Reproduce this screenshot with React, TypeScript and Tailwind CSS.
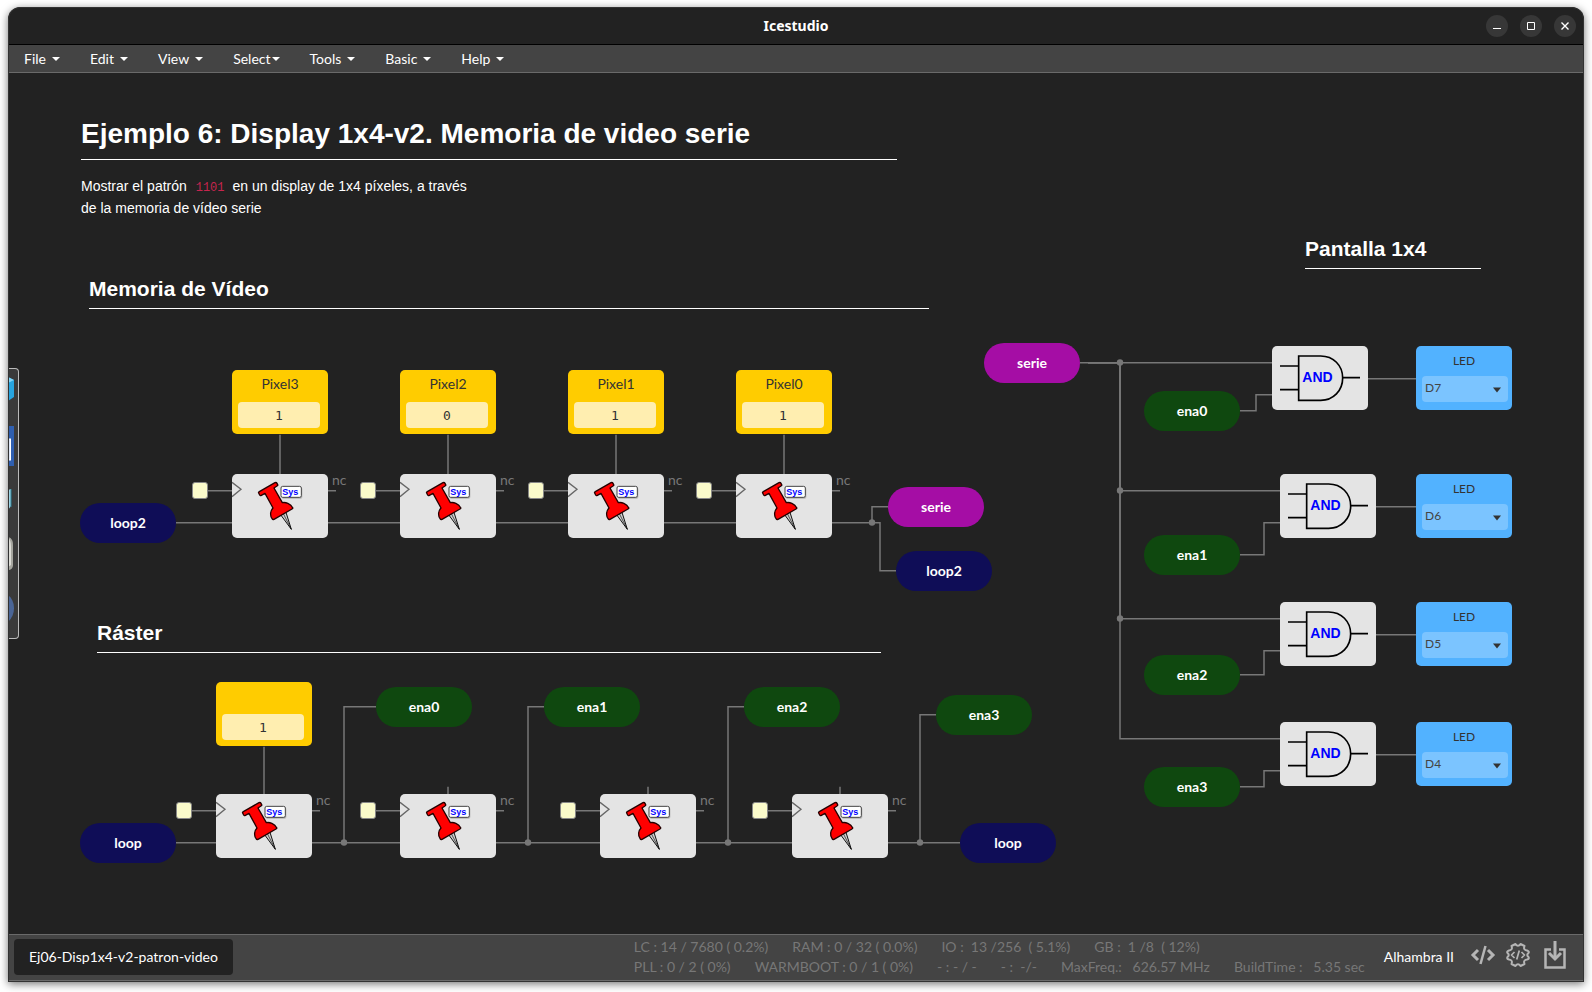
import type { ReactNode } from "react";

const MENUS = ["File", "Edit", "View", "Select", "Tools", "Basic", "Help"];

type Tone = "navy" | "green" | "magenta";
type Label = { name: string; x: number; y: number; tone: Tone };

const TONES: Record<Tone, string> = {
  navy: "bg-[#0f0d57]",
  green: "bg-[#0f480f]",
  magenta: "bg-[#a50da5]",
};

const LABELS: Label[] = [
  { name: "loop2", x: 72, y: 429, tone: "navy" },
  { name: "serie", x: 880, y: 413, tone: "magenta" },
  { name: "loop2", x: 888, y: 477, tone: "navy" },
  { name: "loop", x: 72, y: 749, tone: "navy" },
  { name: "loop", x: 952, y: 749, tone: "navy" },
  { name: "ena0", x: 368, y: 613, tone: "green" },
  { name: "ena1", x: 536, y: 613, tone: "green" },
  { name: "ena2", x: 736, y: 613, tone: "green" },
  { name: "ena3", x: 928, y: 621, tone: "green" },
  { name: "serie", x: 976, y: 269, tone: "magenta" },
  { name: "ena0", x: 1136, y: 317, tone: "green" },
  { name: "ena1", x: 1136, y: 461, tone: "green" },
  { name: "ena2", x: 1136, y: 581, tone: "green" },
  { name: "ena3", x: 1136, y: 693, tone: "green" },
];

const CONSTANTS = [
  { name: "Pixel3", value: "1", x: 224, y: 296 },
  { name: "Pixel2", value: "0", x: 392, y: 296 },
  { name: "Pixel1", value: "1", x: 560, y: 296 },
  { name: "Pixel0", value: "1", x: 728, y: 296 },
  { name: "", value: "1", x: 208, y: 608 },
];

const REGISTERS = [
  { x: 224, y: 400 },
  { x: 392, y: 400 },
  { x: 560, y: 400 },
  { x: 728, y: 400 },
  { x: 208, y: 720 },
  { x: 392, y: 720 },
  { x: 592, y: 720 },
  { x: 784, y: 720 },
];

const GATES = [
  { x: 1264, y: 272 },
  { x: 1272, y: 400 },
  { x: 1272, y: 528 },
  { x: 1272, y: 648 },
];

const LEDS = [
  { pin: "D7", y: 272 },
  { pin: "D6", y: 400 },
  { pin: "D5", y: 528 },
  { pin: "D4", y: 648 },
];

const WIRES = [
  "M272 360V400", "M440 360V400", "M608 360V400", "M776 360V400",
  "M168 448H224", "M320 448H392", "M488 448H560", "M656 448H728",
  "M824 448H864V432H880", "M864 448H872V496H888",
  "M256 672V720", "M440 712V720", "M640 712V720", "M832 712V720",
  "M168 768H208", "M304 768H392", "M488 768H592", "M688 768H784", "M880 768H952",
  "M336 768V632H368", "M520 768V632H536", "M720 768V632H736", "M912 768V640H928",
  "M1072 288H1264", "M1080 288H1112V664H1272", "M1080 288H1112V544H1272", "M1080 288H1112V416H1272",
  "M1232 336H1248V320H1264", "M1232 480H1256V448H1272",
  "M1232 600H1256V576H1272", "M1232 712H1256V696H1272",
  "M1360 304H1408", "M1368 432H1408", "M1368 560H1408", "M1368 680H1408",
];

const JUNCTIONS = [
  [864, 448], [336, 768], [520, 768], [720, 768], [912, 768],
  [1112, 288], [1112, 416], [1112, 544],
];

function Place({ x, y, children }: { x: number; y: number; children: ReactNode }) {
  return (
    <div className="absolute" style={{ left: x, top: y }}>
      {children}
    </div>
  );
}

function Wires() {
  return (
    <svg className="absolute inset-0 h-full w-full" aria-hidden="true">
      <g transform="translate(0 0.75)" fill="none" stroke="#777" strokeWidth="1.5">
        {WIRES.map((d) => (
          <path key={d} d={d} />
        ))}
        {REGISTERS.map(({ x, y }) => (
          <path key={`${x}-${y}`} d={`M${x - 32} ${y + 16}H${x}M${x + 96} ${y + 16}h8`} />
        ))}
      </g>
      <g fill="#777">
        {JUNCTIONS.map(([x, y]) => (
          <circle key={`${x}-${y}`} cx={x} cy={y + 0.5} r="3.2" />
        ))}
      </g>
    </svg>
  );
}

function Pill({ name, tone }: { name: string; tone: Tone }) {
  return (
    <div className={`flex h-10 w-24 items-center justify-center rounded-[20px] text-sm font-bold text-white ${TONES[tone]}`}>
      {name}
    </div>
  );
}

function Constant({ name, value }: { name: string; value: string }) {
  return (
    <label className="flex h-16 w-24 flex-col rounded-[5px] bg-[#ffcc00] pt-1 pr-2 pb-1.5 pl-1.5 text-center text-[#333]">
      <span className="h-7 pl-0.5 text-sm leading-5">{name}</span>
      <input
        aria-label={name || "Constante"}
        defaultValue={value}
        className="h-[26px] w-full rounded bg-[#ffeeb0] text-center font-['DejaVu_Sans_Mono',monospace] text-[13px] text-[#333] outline-none"
      />
    </label>
  );
}

function Register() {
  return (
    <div className="relative h-16 w-24 rounded-[5px] bg-[#e4e4e4]">
      <svg viewBox="0 0 288 192" className="h-16 w-24" aria-hidden="true">
        <path d="M0 25L27 46L0 68" fill="none" stroke="#666" strokeWidth="4" />
        <path d="M145 121L178 166L161 112Z" fill="#d0d0d0" stroke="#111" strokeWidth="3" strokeLinejoin="round" />
        <path d="M153 117L178 166" stroke="#111" strokeWidth="2" />
        <path
          d="M80 57C79 55 80 54 82 53L129 26C132 25 134 26 135 28L137 32C138 34 137 35 135 36L126 42L151 86C160 84 176 88 182 101C183 103 182 104 180 105L126 136C123 137 122 137 121 135C112 124 116 109 123 102L99 58L88 64C86 65 84 65 83 63Z"
          fill="#ff0000"
          stroke="#250000"
          strokeWidth="4"
          strokeLinejoin="round"
        />
        <rect x="149" y="40" width="62" height="34" rx="5" fill="#b5b5b5" />
        <rect x="147" y="37" width="61" height="33" rx="5" fill="#fff" stroke="#444" strokeWidth="3" />
        <text x="151" y="63" fontSize="27" fontWeight="700" fill="#0000ff" fontFamily="'Liberation Sans', sans-serif">
          Sys
        </text>
      </svg>
      <span className="absolute -top-1 left-25 text-sm leading-5 text-[#777]">nc</span>
      <span className="absolute top-2 -left-10 h-[17px] w-4 rounded-[3px] border border-[#888] bg-[#fbfbcb]" />
    </div>
  );
}

function AndGate() {
  return (
    <div className="h-16 w-24 rounded-[5px] bg-[#e4e4e4]">
      <svg viewBox="0 0 288 192" className="h-16 w-24" aria-label="AND">
        <path
          d="M24 60H80M24 131H80M212 95H264M80 30H146C184 30 212 58 212 96S184 163 146 163H80Z"
          fill="none"
          stroke="#000"
          strokeWidth="5"
        />
        <text x="91" y="109" fontSize="42" fontWeight="700" fill="#0000ff" fontFamily="'Liberation Sans', sans-serif">
          AND
        </text>
      </svg>
    </div>
  );
}

function Led({ pin }: { pin: string }) {
  return (
    <label className="relative flex h-16 w-24 flex-col rounded-[5px] bg-[#52b2ff] pt-[7px] pr-1 pl-1.5 text-xs text-[#333]">
      <span className="h-[23px] pr-0.5 text-center leading-4">LED</span>
      <select
        aria-label={`LED ${pin}`}
        defaultValue={pin}
        className="h-[26px] w-full appearance-none rounded bg-[#7bc4ff] pb-0.5 pl-[3px] text-[#444] outline-none"
      >
        <option>{pin}</option>
      </select>
      <svg viewBox="0 0 8 6" className="pointer-events-none absolute right-[11px] bottom-[17px] h-1.5 w-2" aria-hidden="true">
        <path d="M0 0.5H8L4 5.5Z" fill="#333" />
      </svg>
    </label>
  );
}

function SectionTitle({ width, children }: { width: string; children: ReactNode }) {
  return (
    <h2 className={`border-b border-white pb-1 font-['Liberation_Sans',Arial,sans-serif] text-[21px] leading-[30px] font-bold text-white ${width}`}>
      {children}
    </h2>
  );
}

function Toolbox() {
  return (
    <aside className="absolute top-[295px] left-0 h-[271px] w-[11px] overflow-hidden rounded-r border border-l-0 border-[#bbb] bg-[#3a3a3a]">
      <svg width="11" height="269" aria-hidden="true">
        <path d="M0 8L6 11V28L0 32Z" fill="#27a5e0" />
        <path d="M0 8L6 11L0 14Z" fill="#7fd4f7" />
        <rect x="0" y="57" width="6" height="40" fill="#2f5fb0" />
        <rect x="0" y="70" width="2.5" height="21" fill="#dde6f5" stroke="#fff" strokeWidth="1" />
        <path d="M0 121L3 120V137L0 141Z" fill="#9fd6e6" />
        <path d="M3 120V138" stroke="#2d8096" strokeWidth="1" />
        <path d="M0 168C4 169 5 172 5 176V196C5 199 3 201 0 201Z" fill="#a5a59e" />
        <path d="M0 169C2 170 3 173 3 178V196L0 198Z" fill="#dcdcd6" />
        <path d="M0 226C8 232 8 246 0 253Z" fill="#4a6596" />
      </svg>
    </aside>
  );
}

function WindowButton({ label, children }: { label: string; children: ReactNode }) {
  return (
    <button aria-label={label} className="grid size-[22px] place-items-center rounded-full bg-[#373737]">
      <svg width="10" height="10" fill="none" stroke="#fff" aria-hidden="true">
        {children}
      </svg>
    </button>
  );
}

export default function App() {
  return (
    <div className="h-screen bg-white px-2 pt-[7px] pb-2.5 font-[Lato,sans-serif]">
      <div className="relative flex h-full flex-col overflow-hidden rounded-t-xl bg-[#222] shadow-[0_2px_8px_rgba(0,0,0,0.55)] after:pointer-events-none after:absolute after:inset-0 after:rounded-t-xl after:border after:border-[#333]">
        <header className="grid h-[38px] shrink-0 grid-cols-[1fr_auto_1fr] items-center border-b border-black px-2">
          <h1 className="col-start-2 font-['Noto_Sans',sans-serif] text-sm font-bold text-white">Icestudio</h1>
          <div className="flex justify-end gap-3">
            <WindowButton label="Minimize">
              <path d="M1 7.5H9" />
            </WindowButton>
            <WindowButton label="Maximize">
              <path d="M1.5 1.5H8.5V8.5H1.5Z" />
            </WindowButton>
            <WindowButton label="Close">
              <path d="M1.5 1.5L8.5 8.5M8.5 1.5L1.5 8.5" strokeWidth="1.4" />
            </WindowButton>
          </div>
        </header>

        <nav className="flex h-7 shrink-0 items-center border-b border-[#6a6a6a] bg-[#444] pl-px">
          {MENUS.map((menu) => (
            <button key={menu} className="flex items-center px-[15px] text-sm leading-5 text-white">
              {menu}
              <svg viewBox="0 0 8 4" className={menu === "Select" ? "ml-px h-1 w-2" : "ml-1.5 h-1 w-2"} aria-hidden="true">
                <path d="M0 0H8L4 4Z" fill="#fff" />
              </svg>
            </button>
          ))}
        </nav>

        <main className="relative min-h-0 flex-1 overflow-hidden pt-px">
          <div className="relative h-full w-full">
            <Wires />
            <Place x={73} y={41}>
              <section className="w-[816px] font-['Liberation_Sans',Arial,sans-serif] text-white">
                <h1 className="border-b border-white pb-1.5 text-[28px] leading-[38px] font-bold">
                  Ejemplo 6: Display 1x4-v2. Memoria de video serie
                </h1>
                <p className="mt-[15px] text-sm leading-[22px]">
                  Mostrar el patrón{" "}
                  <code className="pr-1 pl-[5px] font-['Liberation_Mono',monospace] text-xs text-[#c7254e]">1101</code> en un
                  display de 1x4 píxeles, a través
                  <br />
                  de la memoria de vídeo serie
                </p>
              </section>
            </Place>
            <Place x={81} y={200}>
              <SectionTitle width="w-[840px]">Memoria de Vídeo</SectionTitle>
            </Place>
            <Place x={89} y={544}>
              <SectionTitle width="w-[784px]">Ráster</SectionTitle>
            </Place>
            <Place x={1297} y={160}>
              <SectionTitle width="w-[176px]">Pantalla 1x4</SectionTitle>
            </Place>
            {LABELS.map((l) => (
              <Place key={`${l.x}-${l.y}`} x={l.x} y={l.y}>
                <Pill name={l.name} tone={l.tone} />
              </Place>
            ))}
            {CONSTANTS.map((c) => (
              <Place key={`${c.x}-${c.y}`} x={c.x} y={c.y}>
                <Constant name={c.name} value={c.value} />
              </Place>
            ))}
            {REGISTERS.map((r) => (
              <Place key={`${r.x}-${r.y}`} x={r.x} y={r.y}>
                <Register />
              </Place>
            ))}
            {GATES.map((g) => (
              <Place key={g.y} x={g.x} y={g.y}>
                <AndGate />
              </Place>
            ))}
            {LEDS.map((led) => (
              <Place key={led.pin} x={1408} y={led.y}>
                <Led pin={led.pin} />
              </Place>
            ))}
          </div>
          <Toolbox />
        </main>

        <footer className="mb-px flex h-[47px] shrink-0 items-center border-y border-[#6a6a6a] bg-[#444] pr-[18px] pb-0.5 pl-1.5 text-sm text-white">
          <button className="h-9 rounded bg-[#222] px-[15px]">Ej06-Disp1x4-v2-patron-video</button>
          <div className="ml-auto text-[#777]">
            <div className="flex gap-6 leading-5 whitespace-pre">
              <span>LC : 14 / 7680 ( 0.2%)</span>
              <span>RAM : 0 / 32 ( 0.0%)</span>
              <span>{"IO :  13 /256  ( 5.1%)"}</span>
              <span>{"GB :  1 /8  ( 12%)"}</span>
            </div>
            <div className="flex gap-6 leading-5 whitespace-pre">
              <span>PLL : 0 / 2 ( 0%)</span>
              <span>WARMBOOT : 0 / 1 ( 0%)</span>
              <span>- : - / -</span>
              <span>{"- :  -/-"}</span>
              <span>{"MaxFreq.:   626.57 MHz"}</span>
              <span>{"BuildTime :   5.35 sec"}</span>
            </div>
          </div>
          <span className="ml-[19px]">Alhambra II</span>
          <div className="mb-1 ml-4 flex items-center text-[#b5b5b5]">
            <button aria-label="Verify">
              <svg width="26" height="20" fill="none" stroke="currentColor" strokeWidth="3" aria-hidden="true">
                <path d="M8 5L3 10L8 15M18 5L23 10L18 15" />
                <path d="M15.500 1L10.500 19" strokeWidth="2.500" />
              </svg>
            </button>
            <button aria-label="Build" className="ml-2.5">
              <svg width="24" height="26" fill="none" stroke="currentColor" strokeWidth="2" strokeLinejoin="round" aria-hidden="true">
                <path d="M9.500 2Q12 5.500 14.500 2L18.500 4Q17 8 21 8.500Q23.500 9.500 22.500 11Q20 13 22.500 15Q23.500 17 21 17.500Q17 18 18.500 22L14.500 24Q12 20.500 9.500 24L5.500 22Q7 18 3 17.500Q.5 17 1.500 15Q4 13 1.500 11Q.5 9.500 3 8.500Q7 8 5.500 4Z" />
                <path d="M8.500 10L5.500 13L8.500 16M15.500 10L18.500 13L15.500 16M13.300 8.500L10.700 17.500" strokeWidth="1.700" />
              </svg>
            </button>
            <button aria-label="Upload" className="ml-3.5">
              <svg width="22" height="28" fill="none" stroke="currentColor" strokeWidth="2.500" aria-hidden="true">
                <path d="M7 8.500H1.500V26.500H20.500V8.500H15" />
                <path d="M11 0V16" strokeWidth="3" />
                <path d="M5 12L11 18L17 12" strokeWidth="3" />
              </svg>
            </button>
          </div>
        </footer>
      </div>
    </div>
  );
}
